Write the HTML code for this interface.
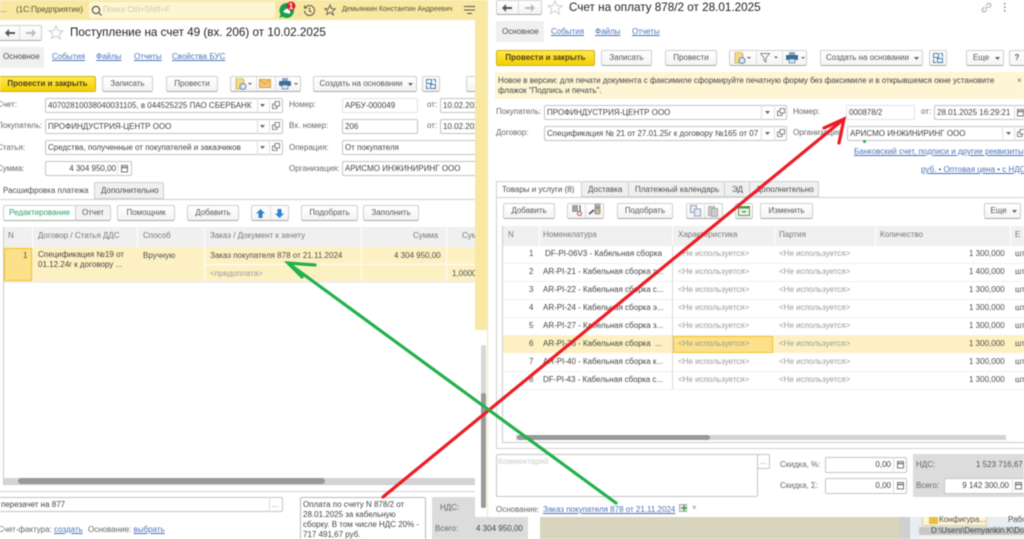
<!DOCTYPE html>
<html lang="ru"><head><meta charset="utf-8"><title>1C</title>
<style>
html,body{margin:0;padding:0;background:#fff}
#p{position:relative;width:1024px;height:539px;overflow:hidden;background:#fff;font:8px/12px "Liberation Sans",sans-serif;color:#4d4d4d;filter:blur(.4px)}
#p div,#p span.t,#p svg{position:absolute}
.t{white-space:nowrap}
.l{color:#4a72b8;text-decoration:underline}
.k{color:#666}
.b{box-sizing:border-box;background:linear-gradient(#fff,#f4f4f4);border:1px solid #cfcfcf;border-bottom-color:#a9a9a9;border-radius:2px;text-align:center;color:#555;line-height:14px;height:16px;white-space:nowrap}
.y{background:linear-gradient(#ffe84a,#f5cf00);border-color:#d0b020;color:#4a4020;font-weight:bold}
.i{box-sizing:border-box;background:#fff;border:1px solid #c4c4c4;border-radius:2px;height:15px;line-height:13px;padding-left:2px;white-space:nowrap;overflow:hidden;color:#444}
.h{background:#f0f0f0}
.g{color:#999}
.s{width:1px;background:#ddd}
.w{width:1px;height:20px;background:#fff;top:226px}
</style></head><body><div id="p">

<!-- left window -->
<div style="left:0;top:0;width:488px;height:20px;background:#f8e8a2"></div>
<span class="t" style="left:0;top:4px;color:#555">...</span>
<span class="t" style="left:16px;top:4px;color:#5a5030">(1С:Предприятие)</span>
<div style="left:89px;top:2px;width:186px;height:16px;background:#fdf6d2;border-radius:2px"></div>
<svg style="left:91px;top:5px" width="11" height="11" viewBox="0 0 11 11" fill="none" stroke="#555" stroke-width="1.2"><circle cx="5" cy="5" r="3.6"/><path d="M8 8l2.500 2.500"/></svg>
<span class="t" style="left:103px;top:4px;color:#cfc9a5">Поиск Ctrl+Shift+F</span>
<svg style="left:278px;top:1px" width="20" height="19" viewBox="0 0 20 19"><path d="M8.500 2a7.500 7.500 0 1 1-4 13.800L1.500 17l1-3.500A7.500 7.500 0 0 1 8.500 2z" fill="#12a150"/><path d="M5 11c2-3 4-4 7-4v6c-3-1-5-1-7-2z" fill="#fff"/><circle cx="13" cy="5" r="4.500" fill="#e0202a"/><text x="13" y="8" text-anchor="middle" font-size="8" font-weight="bold" fill="#fff" font-family="Liberation Sans">1</text></svg>
<svg style="left:303px;top:4px" width="13" height="13" viewBox="0 0 13 13" fill="none" stroke="#555"><path d="M2.500 3.500A5 5 0 1 1 1.500 6.500"/><path d="M1.500 1.500v2.500h2.500M6.500 3.500v3.500l2 1"/></svg>
<svg style="left:324px;top:4px" width="12" height="12" viewBox="0 0 12 12" fill="none" stroke="#666"><path d="M6 1l1.500 3.500 3.800.3-2.900 2.500.9 3.700L6 8.500 2.700 10.500l.9-3.700L.7 4.800l3.800-.3z"/></svg>
<span class="t" style="left:342px;top:4px;font-size:6.900px;color:#55503a">Демьянкин Константин Андреевич</span>
<svg style="left:463px;top:5px" width="13" height="11" viewBox="0 0 13 11" fill="none" stroke="#555"><path d="M1 1.500h11M1 5h11M4 8.500h5"/></svg>

<div class="b" style="left:-1px;top:25px;width:43px;height:16px"></div>
<div class="s" style="left:19px;top:26px;height:14px"></div>
<svg style="left:5px;top:29px" width="10" height="8" viewBox="0 0 10 8"><path d="M4 0v3h6v2H4v3L0 4z" fill="#555"/></svg>
<svg style="left:26px;top:29px" width="10" height="8" viewBox="0 0 10 8"><path d="M6 0v3H0v2h6v3l4-4z" fill="#bbb"/></svg>
<svg style="left:48px;top:25px" width="16" height="15" viewBox="0 0 16 15" fill="none" stroke="#ccc"><path d="M8 1l2 4.500 5 .4-3.800 3.200 1.200 4.900L8 11l-4.400 2.500 1.200-4.900L1 5.900l5-.4z"/></svg>
<span class="t" style="left:70px;top:25px;font-size:11.700px;line-height:15px;color:#222">Поступление на счет 49 (вх. 206) от 10.02.2025</span>

<div class="h" style="left:0;top:47px;width:44px;height:21px"></div>
<span class="t" style="left:3px;top:51px">Основное</span>
<span class="t l" style="left:52px;top:51px">События</span>
<span class="t l" style="left:96px;top:51px">Файлы</span>
<span class="t l" style="left:134px;top:51px">Отчеты</span>
<span class="t l" style="left:172px;top:51px">Свойства БУС</span>

<div class="b y" style="left:-3px;top:76px;width:99px;padding-left:2px">Провести и закрыть</div>
<div class="b" style="left:102px;top:76px;width:51px">Записать</div>
<div class="b" style="left:166px;top:76px;width:52px">Провести</div>
<div class="b" style="left:230px;top:76px;width:71px"></div>
<div class="s" style="left:256px;top:77px;height:14px"></div>
<div class="s" style="left:275px;top:77px;height:14px"></div>
<svg style="left:235px;top:78px" width="17" height="12" viewBox="0 0 17 12"><path d="M1 0h6l2 2v9H1z" fill="#f2d98c" stroke="#c9a24d" stroke-width=".7"/><circle cx="8" cy="8.500" r="3" fill="#dfe9f5" stroke="#5f86b3"/><path d="M13 5h4l-2 2z" fill="#666"/></svg>
<svg style="left:259px;top:79px" width="13" height="10" viewBox="0 0 13 10"><rect x=".5" y=".5" width="11" height="8" fill="#f2c877" stroke="#d8a24a"/><path d="M.5 .5l5.500 4.500 5.500-4.500" fill="none" stroke="#d8a24a"/></svg>
<svg style="left:279px;top:78px" width="19" height="12" viewBox="0 0 19 12"><path d="M3 0h6v3H3z" fill="#8aa5c5"/><rect x="0" y="3" width="12" height="5" rx="1" fill="#3f6c9b"/><rect x="3" y="7" width="6" height="4" fill="#d9e3ef" stroke="#3f6c9b" stroke-width=".6"/><path d="M15 5h4l-2 2z" fill="#666"/></svg>
<div class="b" style="left:313px;top:76px;width:104px;padding-right:8px">Создать на основании</div>
<svg style="left:408px;top:83px" width="5" height="3" viewBox="0 0 5 3"><path d="M0 0h5L2.500 3z" fill="#666"/></svg>
<div class="b" style="left:422px;top:76px;width:18px"></div>
<svg style="left:425px;top:78px" width="12" height="12" viewBox="0 0 12 12" fill="none" stroke="#4a7fae"><rect x="1.500" y="1.500" width="5" height="4"/><rect x="5.500" y="6.500" width="5" height="4"/><path d="M8 1.500h2.500V5M4 10.500H1.500V7"/></svg>
<div class="b" style="left:466px;top:76px;width:20px"></div>

<span class="t k" style="left:-3px;top:99px">Счет:</span>
<span class="t k" style="left:-3px;top:120px">Покупатель:</span>
<span class="t k" style="left:-3px;top:142px">Статья:</span>
<span class="t k" style="left:-3px;top:163px">Сумма:</span>
<div class="i" style="left:45px;top:98px;width:238px">40702810038040031105, в 044525225 ПАО СБЕРБАНК</div>
<div class="i" style="left:45px;top:119px;width:238px">ПРОФИНДУСТРИЯ-ЦЕНТР ООО</div>
<div class="i" style="left:45px;top:140px;width:238px">Средства, полученные от покупателей и заказчиков</div>
<div class="i" style="left:45px;top:161px;width:87px;text-align:right;padding-right:15px">4 304 950,00</div>
<div class="s" style="left:257px;top:98px;height:15px"></div><div class="s" style="left:269px;top:98px;height:15px"></div>
<div class="s" style="left:257px;top:119px;height:15px"></div><div class="s" style="left:269px;top:119px;height:15px"></div>
<div class="s" style="left:257px;top:140px;height:15px"></div><div class="s" style="left:269px;top:140px;height:15px"></div>
<div class="s" style="left:117px;top:161px;height:15px"></div>
<svg style="left:260px;top:104px" width="5" height="3" viewBox="0 0 5 3"><path d="M0 0h5L2.500 3z" fill="#666"/></svg>
<svg style="left:260px;top:125px" width="5" height="3" viewBox="0 0 5 3"><path d="M0 0h5L2.500 3z" fill="#666"/></svg>
<svg style="left:260px;top:146px" width="5" height="3" viewBox="0 0 5 3"><path d="M0 0h5L2.500 3z" fill="#666"/></svg>
<svg style="left:272px;top:101px" width="8" height="8" viewBox="0 0 8 8" fill="none" stroke="#666" stroke-width=".8"><path d="M3 .5h4.500V5H3zM3 3H.5v4.500H5V5"/></svg>
<svg style="left:272px;top:122px" width="8" height="8" viewBox="0 0 8 8" fill="none" stroke="#666" stroke-width=".8"><path d="M3 .5h4.500V5H3zM3 3H.5v4.500H5V5"/></svg>
<svg style="left:272px;top:143px" width="8" height="8" viewBox="0 0 8 8" fill="none" stroke="#666" stroke-width=".8"><path d="M3 .5h4.500V5H3zM3 3H.5v4.500H5V5"/></svg>
<svg style="left:120px;top:164px" width="9" height="9" viewBox="0 0 9 9" fill="none" stroke="#777"><rect x="1.500" y="1.500" width="6" height="6.500"/><path d="M1.500 3.500h6" stroke-width="1.500"/></svg>
<span class="t k" style="left:289px;top:99px">Номер:</span>
<span class="t k" style="left:289px;top:120px">Вх. номер:</span>
<span class="t k" style="left:289px;top:142px">Операция:</span>
<span class="t k" style="left:289px;top:163px">Организация:</span>
<div class="i" style="left:342px;top:98px;width:76px;border-color:#e2e2e2">АРБУ-000049</div>
<div class="i" style="left:342px;top:119px;width:76px">206</div>
<div class="i" style="left:342px;top:140px;width:140px">От покупателя</div>
<div class="i" style="left:342px;top:161px;width:140px">АРИСМО ИНЖИНИРИНГ ООО</div>
<span class="t k" style="left:427px;top:99px">от:</span>
<span class="t k" style="left:427px;top:120px">от:</span>
<div class="i" style="left:440px;top:98px;width:50px">10.02.2025</div>
<div class="i" style="left:440px;top:119px;width:50px">10.02.2025</div>

<div style="left:0;top:199px;width:475px;height:1px;background:#d0d0d0"></div>
<div style="left:94px;top:182px;width:70px;height:17px;box-sizing:border-box;background:#f0f0f0;border:1px solid #d0d0d0;border-radius:2px 2px 0 0"></div>
<span class="t" style="left:3px;top:185px">Расшифровка платежа</span>
<span class="t" style="left:101px;top:185px">Дополнительно</span>
<div class="b" style="left:3px;top:205px;width:73px;background:#fff;color:#2fa26a">Редактирование</div>
<div class="b" style="left:75px;top:205px;width:36px;background:#f4f4f4">Отчет</div>
<div class="b" style="left:117px;top:205px;width:58px">Помощник</div>
<div class="b" style="left:187px;top:205px;width:52px">Добавить</div>
<div class="b" style="left:251px;top:205px;width:38px"></div>
<div class="s" style="left:270px;top:206px;height:14px"></div>
<svg style="left:256px;top:209px" width="9" height="9" viewBox="0 0 9 9"><path d="M4.500 0L9 4.500H6.500V9h-4V4.500H0z" fill="#2a86d0"/></svg>
<svg style="left:275px;top:209px" width="9" height="9" viewBox="0 0 9 9"><path d="M4.500 9L9 4.500H6.500V0h-4v4.500H0z" fill="#2a86d0"/></svg>
<div class="b" style="left:301px;top:205px;width:57px">Подобрать</div>
<div class="b" style="left:363px;top:205px;width:56px">Заполнить</div>

<div style="left:3px;top:227px;width:472px;height:258px;box-sizing:border-box;border:1px solid #ccc;border-right:0"></div>
<div class="h" style="left:4px;top:227px;width:471px;height:20px"></div>
<div class="w" style="left:32px;top:227px"></div><div class="w" style="left:137px;top:227px"></div><div class="w" style="left:204px;top:227px"></div><div class="w" style="left:361px;top:227px"></div><div class="w" style="left:446px;top:227px"></div>
<span class="t" style="left:8px;top:230px;color:#777">N</span>
<span class="t" style="left:38px;top:230px;color:#777">Договор / Статья ДДС</span>
<span class="t" style="left:143px;top:230px;color:#777">Способ</span>
<span class="t" style="left:210px;top:230px;color:#777">Заказ / Документ к зачету</span>
<span class="t" style="left:413px;top:230px;color:#777">Сумма</span>
<span class="t" style="left:462px;top:230px;color:#777">Сумма</span>
<div style="left:4px;top:247px;width:471px;height:34px;background:#fdf1c3"></div>
<div style="left:4px;top:248px;width:28px;height:33px;box-sizing:border-box;background:#fde18a;border:1px solid #f2c230"></div>
<div style="left:204px;top:264px;width:271px;height:1px;background:#fff"></div>
<div style="left:204px;top:247px;width:1px;height:34px;background:#fff"></div>
<div style="left:361px;top:247px;width:1px;height:34px;background:#fff"></div>
<div style="left:446px;top:247px;width:1px;height:34px;background:#fff"></div>
<div style="left:4px;top:281px;width:471px;height:2px;background:#eee"></div>
<span class="t" style="left:23px;top:250px">1</span>
<span class="t" style="left:38px;top:250px;line-height:10px;color:#444">Спецификация №19 от<br>01.12.24г к договору ...</span>
<span class="t" style="left:143px;top:250px">Вручную</span>
<span class="t" style="left:210px;top:250px">Заказ покупателя 878 от 21.11.2024</span>
<span class="t" style="left:394px;top:250px">4 304 950,00</span>
<span class="t g" style="left:210px;top:268px">&lt;предоплата&gt;</span>
<span class="t" style="left:452px;top:268px">1,0000</span>

<div style="left:4px;top:478px;width:471px;height:6px;background:#d4d4d4"></div>
<div style="left:18px;top:478px;width:307px;height:6px;background:#999;border-radius:3px"></div>
<div style="left:0;top:491px;width:475px;height:1px;background:#d0d0d0"></div>
<div class="i" style="left:-3px;top:497px;width:286px;padding-left:3px">перезачет на 877</div>
<div class="s" style="left:269px;top:497px;height:15px"></div>
<span class="t" style="left:272px;top:499px;color:#888">...</span>
<div style="left:300px;top:497px;width:126px;height:50px;box-sizing:border-box;border:1px solid #bbb;border-radius:2px;line-height:10px;padding:2px;color:#444">Оплата по счету N 878/2 от 28.01.2025 за кабельную сборку. В том числе НДС 20% - 717 491,67 руб.</div>
<span class="t k" style="left:-2px;top:524px">Счет-фактура: <span class="l">создать</span></span>
<span class="t k" style="left:88px;top:524px">Основание: <span class="l">выбрать</span></span>
<div style="left:432px;top:497px;width:43px;height:42px;background:#dcdcdc"></div>
<div style="left:475px;top:517px;width:53px;height:22px;background:#dcdcdc"></div>
<span class="t k" style="left:440px;top:502px">НДС:</span>
<span class="t k" style="left:435px;top:523px">Всего:</span>
<span class="t" style="left:476px;top:523px;color:#444">4 304 950,00</span>

<!-- left window right strip & scrollbar -->
<div style="left:475px;top:20px;width:13px;height:310px;background:#f8e8a2"></div>
<div style="left:475px;top:330px;width:13px;height:187px;background:#fff"></div>
<div style="left:481px;top:345px;width:5px;height:163px;background:#d8d8d8;border-radius:2px"></div>
<div style="left:481px;top:393px;width:5px;height:115px;background:#9a9a9a;border-radius:2px"></div>

<!-- right window -->
<div style="left:487px;top:0;width:1px;height:517px;background:#f2e6b4"></div>
<div style="left:488px;top:0;width:536px;height:517px;background:#fff"></div>
<div class="b" style="left:496px;top:0;width:46px;height:15px"></div>
<div class="s" style="left:518px;top:0;height:14px"></div>
<svg style="left:502px;top:4px" width="10" height="8" viewBox="0 0 10 8"><path d="M4 0v3h6v2H4v3L0 4z" fill="#555"/></svg>
<svg style="left:525px;top:4px" width="10" height="8" viewBox="0 0 10 8"><path d="M6 0v3H0v2h6v3l4-4z" fill="#bbb"/></svg>
<svg style="left:547px;top:0" width="16" height="15" viewBox="0 0 16 15" fill="none" stroke="#ccc"><path d="M8 1l2 4.500 5 .4-3.800 3.200 1.200 4.900L8 11l-4.400 2.500 1.200-4.900L1 5.900l5-.4z"/></svg>
<span class="t" style="left:569px;top:0;font-size:11.700px;line-height:15px;color:#222">Счет на оплату 878/2 от 28.01.2025</span>
<svg style="left:981px;top:2px" width="11" height="11" viewBox="0 0 11 11" fill="none" stroke="#aaa" stroke-width="1.100"><path d="M4.500 6.500l2-2M3.500 5L1.500 7a1.800 1.800 0 0 0 2.500 2.500l2-2M7.500 6L9.500 4A1.800 1.800 0 0 0 7 1.500L5 3.500"/></svg>
<svg style="left:1003px;top:3px" width="3" height="9" viewBox="0 0 3 9" fill="#888"><rect x="1" y="0" width="1.500" height="1.500"/><rect x="1" y="3.500" width="1.500" height="1.500"/><rect x="1" y="7" width="1.500" height="1.500"/></svg>

<div class="h" style="left:496px;top:21px;width:48px;height:21px"></div>
<span class="t" style="left:502px;top:26px">Основное</span>
<span class="t l" style="left:551px;top:26px">События</span>
<span class="t l" style="left:595px;top:26px">Файлы</span>
<span class="t l" style="left:632px;top:26px">Отчеты</span>

<div class="b y" style="left:496px;top:50px;width:99px">Провести и закрыть</div>
<div class="b" style="left:601px;top:50px;width:51px">Записать</div>
<div class="b" style="left:665px;top:50px;width:52px">Провести</div>
<div class="b" style="left:729px;top:50px;width:78px"></div>
<div class="s" style="left:756px;top:51px;height:14px"></div>
<div class="s" style="left:782px;top:51px;height:14px"></div>
<svg style="left:734px;top:52px" width="17" height="12" viewBox="0 0 17 12"><path d="M1 0h6l2 2v9H1z" fill="#f2d98c" stroke="#c9a24d" stroke-width=".7"/><circle cx="8" cy="8.500" r="3" fill="#dfe9f5" stroke="#5f86b3"/><path d="M13 5h4l-2 2z" fill="#666"/></svg>
<svg style="left:760px;top:53px" width="19" height="10" viewBox="0 0 19 10"><path d="M.5 .5h9l-3.500 4.500v4l-2-1.500V5z" fill="none" stroke="#888"/><path d="M14 3.500h4l-2 2z" fill="#666"/></svg>
<svg style="left:786px;top:52px" width="19" height="12" viewBox="0 0 19 12"><path d="M3 0h6v3H3z" fill="#8aa5c5"/><rect x="0" y="3" width="12" height="5" rx="1" fill="#3f6c9b"/><rect x="3" y="7" width="6" height="4" fill="#d9e3ef" stroke="#3f6c9b" stroke-width=".6"/><path d="M15 5h4l-2 2z" fill="#666"/></svg>
<div class="b" style="left:820px;top:50px;width:103px;padding-right:8px">Создать на основании</div>
<svg style="left:914px;top:57px" width="5" height="3" viewBox="0 0 5 3"><path d="M0 0h5L2.500 3z" fill="#666"/></svg>
<div class="b" style="left:929px;top:50px;width:18px"></div>
<svg style="left:932px;top:52px" width="12" height="12" viewBox="0 0 12 12" fill="none" stroke="#4a7fae"><rect x="1.500" y="1.500" width="5" height="4"/><rect x="5.500" y="6.500" width="5" height="4"/><path d="M8 1.500h2.500V5M4 10.500H1.500V7"/></svg>
<div class="b" style="left:966px;top:50px;width:38px;padding-right:8px">Еще</div>
<svg style="left:995px;top:57px" width="5" height="3" viewBox="0 0 5 3"><path d="M0 0h5L2.500 3z" fill="#666"/></svg>
<div class="b" style="left:1009px;top:50px;width:30px;padding-right:14px;font-weight:bold">?</div>

<div style="left:495px;top:72px;width:529px;height:27px;background:#fdf5d3"></div>
<span class="t" style="left:498px;top:76px;font-size:7.950px;line-height:10px;color:#444">Новое в версии: для печати документа с факсимиле сформируйте печатную форму без факсимиле и в открывшемся окне установите<br>флажок "Подпись и печать".</span>
<span class="t" style="left:1017px;top:75px;color:#666">×</span>

<span class="t k" style="left:496px;top:106px">Покупатель:</span>
<span class="t k" style="left:496px;top:127px">Договор:</span>
<div class="i" style="left:544px;top:105px;width:243px">ПРОФИНДУСТРИЯ-ЦЕНТР ООО</div>
<div class="i" style="left:544px;top:126px;width:243px">Спецификация № 21 от 27.01.25г к договору №165 от 07</div>
<div class="s" style="left:761px;top:105px;height:15px"></div><div class="s" style="left:774px;top:105px;height:15px"></div>
<div class="s" style="left:761px;top:126px;height:15px"></div><div class="s" style="left:774px;top:126px;height:15px"></div>
<svg style="left:765px;top:111px" width="5" height="3" viewBox="0 0 5 3"><path d="M0 0h5L2.500 3z" fill="#666"/></svg>
<svg style="left:765px;top:132px" width="5" height="3" viewBox="0 0 5 3"><path d="M0 0h5L2.500 3z" fill="#666"/></svg>
<svg style="left:777px;top:108px" width="8" height="8" viewBox="0 0 8 8" fill="none" stroke="#666" stroke-width=".8"><path d="M3 .5h4.500V5H3zM3 3H.5v4.500H5V5"/></svg>
<svg style="left:777px;top:129px" width="8" height="8" viewBox="0 0 8 8" fill="none" stroke="#666" stroke-width=".8"><path d="M3 .5h4.500V5H3zM3 3H.5v4.500H5V5"/></svg>
<span class="t k" style="left:793px;top:106px">Номер:</span>
<span class="t k" style="left:793px;top:127px">Организация:</span>
<div class="i" style="left:846px;top:105px;width:69px;border-color:#e4e4e4">000878/2</div>
<span class="t k" style="left:921px;top:106px">от:</span>
<div class="i" style="left:934px;top:105px;width:100px">28.01.2025 16:29:21</div>
<div class="s" style="left:1014px;top:105px;height:15px"></div>
<svg style="left:1016px;top:108px" width="9" height="9" viewBox="0 0 9 9" fill="none" stroke="#777"><rect x="1.500" y="1.500" width="6" height="6.500"/><path d="M1.500 3.500h6" stroke-width="1.500"/></svg>
<div class="i" style="left:847px;top:126px;width:190px">АРИСМО ИНЖИНИРИНГ ООО</div>
<div class="s" style="left:1002px;top:126px;height:15px"></div>
<div class="s" style="left:1014px;top:126px;height:15px"></div>
<svg style="left:1006px;top:132px" width="5" height="3" viewBox="0 0 5 3"><path d="M0 0h5L2.500 3z" fill="#666"/></svg>
<svg style="left:1017px;top:129px" width="8" height="8" viewBox="0 0 8 8" fill="none" stroke="#666" stroke-width=".8"><path d="M3 .5h4.500V5H3zM3 3H.5v4.500H5V5"/></svg>
<div style="left:863px;top:140px;width:3px;height:3px;border-radius:2px;background:#22b14c"></div>
<span class="t l" style="left:854px;top:146px">Банковский счет, подписи и другие реквизиты</span>
<span class="t l" style="left:921px;top:164px">руб. • Оптовая цена • с НДС</span>

<div style="left:496px;top:197px;width:528px;height:1px;background:#d0d0d0"></div>
<div style="left:496px;top:181px;width:1px;height:267px;background:#d0d0d0"></div>
<div style="left:496px;top:181px;width:85px;height:1px;background:#d0d0d0"></div>
<div style="left:581px;top:181px;width:238px;height:16px;box-sizing:border-box;background:#f0f0f0;border:1px solid #d0d0d0;border-radius:2px 2px 0 0"></div>
<div style="left:628px;top:181px;width:1px;height:16px;background:#d0d0d0"></div>
<div style="left:724px;top:181px;width:1px;height:16px;background:#d0d0d0"></div>
<div style="left:749px;top:181px;width:1px;height:16px;background:#d0d0d0"></div>
<span class="t" style="left:502px;top:184px">Товары и услуги (8)</span>
<span class="t" style="left:588px;top:184px">Доставка</span>
<span class="t" style="left:635px;top:184px">Платежный календарь</span>
<span class="t" style="left:732px;top:184px">ЭД</span>
<span class="t" style="left:756px;top:184px">Дополнительно</span>

<div class="b" style="left:503px;top:203px;width:52px">Добавить</div>
<div class="b" style="left:567px;top:203px;width:37px"></div>
<div class="s" style="left:585px;top:204px;height:14px"></div>
<svg style="left:572px;top:205px" width="11" height="12" viewBox="0 0 11 12"><path d="M1 0v7M3 0v7M5 0v7M8 0v7" stroke="#666" stroke-width="1.200"/><circle cx="7.500" cy="8.500" r="2" fill="none" stroke="#a55"/></svg>
<svg style="left:589px;top:204px" width="12" height="13" viewBox="0 0 12 13"><rect x="6" y="0" width="5" height="10" rx="1" fill="#d9b878" stroke="#666" stroke-width=".6"/><rect x="7" y="2" width="3" height="3" fill="#5aa0d8"/><path d="M0 10l5-4" stroke="#446" stroke-width="1.500"/></svg>
<div class="b" style="left:617px;top:203px;width:56px">Подобрать</div>
<div class="b" style="left:686px;top:203px;width:37px"></div>
<div class="s" style="left:704px;top:204px;height:14px"></div>
<svg style="left:690px;top:205px" width="11" height="12" viewBox="0 0 11 12" fill="#e7edf5" stroke="#8fa3bb"><rect x=".5" y=".5" width="6" height="7"/><rect x="4.500" y="4" width="6" height="7"/></svg>
<svg style="left:708px;top:205px" width="10" height="12" viewBox="0 0 10 12" fill="#ccc" stroke="#aaa"><rect x=".5" y="1.500" width="6" height="9"/><rect x="3.500" y="3.500" width="6" height="8"/></svg>
<div class="b" style="left:735px;top:203px;width:18px"></div>
<svg style="left:738px;top:206px" width="12" height="10" viewBox="0 0 12 10"><rect x=".5" y=".5" width="11" height="9" fill="#eaf3e2" stroke="#5e9a55"/><path d="M.5 .5h11v2H.5z" fill="#3f9a4d"/><path d="M3 5l3 2 3-2z" fill="#5e9a55"/></svg>
<div class="b" style="left:760px;top:203px;width:53px">Изменить</div>
<div class="b" style="left:984px;top:203px;width:37px;padding-right:8px">Еще</div>
<svg style="left:1012px;top:210px" width="5" height="3" viewBox="0 0 5 3"><path d="M0 0h5L2.500 3z" fill="#666"/></svg>

<div style="left:502px;top:226px;width:522px;height:217px;box-sizing:border-box;border:1px solid #ccc;border-right:0"></div>
<div class="h" style="left:503px;top:226px;width:521px;height:20px"></div>
<div class="w" style="left:539px"></div><div class="w" style="left:672px"></div><div class="w" style="left:774px"></div><div class="w" style="left:875px"></div><div class="w" style="left:1010px"></div>
<span class="t" style="left:508px;top:229px;color:#777">N</span>
<span class="t" style="left:543px;top:229px;color:#777">Номенклатура</span>
<span class="t" style="left:678px;top:229px;color:#777">Характеристика</span>
<span class="t" style="left:779px;top:229px;color:#777">Партия</span>
<span class="t" style="left:880px;top:229px;color:#777">Количество</span>
<span class="t" style="left:1015px;top:229px;color:#777">Е</span>

<div style="left:503px;top:335px;width:521px;height:18px;background:#fdf1c3"></div>
<div style="left:673px;top:336px;width:100px;height:17px;box-sizing:border-box;background:#fde18a;border:1px solid #f2c230"></div>
<div style="left:503px;top:263px;width:521px;height:1px;background:#f0f0f0"></div>
<div style="left:503px;top:281px;width:521px;height:1px;background:#f0f0f0"></div>
<div style="left:503px;top:299px;width:521px;height:1px;background:#f0f0f0"></div>
<div style="left:503px;top:317px;width:521px;height:1px;background:#f0f0f0"></div>
<div style="left:503px;top:371px;width:521px;height:1px;background:#f0f0f0"></div>
<div style="left:503px;top:389px;width:521px;height:1px;background:#f0f0f0"></div>
<div style="left:672px;top:246px;width:1px;height:143px;background:#d8d8d8"></div>

<span class="t" style="left:529px;top:248px">1</span><span class="t" style="left:545px;top:248px;color:#444">DF-PI-06V3 - Кабельная сборка</span><span class="t g" style="left:678px;top:248px">&lt;Не используется&gt;</span><span class="t g" style="left:779px;top:248px">&lt;Не используется&gt;</span><span class="t" style="left:969px;top:248px">1 300,000</span><span class="t" style="left:1015px;top:248px">шт</span>
<span class="t" style="left:529px;top:266px">2</span><span class="t" style="left:543px;top:266px;color:#444">AR-PI-21 - Кабельная сборка э...</span><span class="t g" style="left:678px;top:266px">&lt;Не используется&gt;</span><span class="t g" style="left:779px;top:266px">&lt;Не используется&gt;</span><span class="t" style="left:969px;top:266px">1 400,000</span><span class="t" style="left:1015px;top:266px">шт</span>
<span class="t" style="left:529px;top:284px">3</span><span class="t" style="left:543px;top:284px;color:#444">AR-PI-22 - Кабельная сборка с...</span><span class="t g" style="left:678px;top:284px">&lt;Не используется&gt;</span><span class="t g" style="left:779px;top:284px">&lt;Не используется&gt;</span><span class="t" style="left:969px;top:284px">1 300,000</span><span class="t" style="left:1015px;top:284px">шт</span>
<span class="t" style="left:529px;top:302px">4</span><span class="t" style="left:543px;top:302px;color:#444">AR-PI-24 - Кабельная сборка э...</span><span class="t g" style="left:678px;top:302px">&lt;Не используется&gt;</span><span class="t g" style="left:779px;top:302px">&lt;Не используется&gt;</span><span class="t" style="left:969px;top:302px">1 300,000</span><span class="t" style="left:1015px;top:302px">шт</span>
<span class="t" style="left:529px;top:320px">5</span><span class="t" style="left:543px;top:320px;color:#444">AR-PI-27 - Кабельная сборка з...</span><span class="t g" style="left:678px;top:320px">&lt;Не используется&gt;</span><span class="t g" style="left:779px;top:320px">&lt;Не используется&gt;</span><span class="t" style="left:969px;top:320px">1 300,000</span><span class="t" style="left:1015px;top:320px">шт</span>
<span class="t" style="left:529px;top:338px">6</span><span class="t" style="left:543px;top:338px;color:#444">AR-PI-36 - Кабельная сборка &nbsp;...</span><span class="t g" style="left:678px;top:338px">&lt;Не используется&gt;</span><span class="t g" style="left:779px;top:338px">&lt;Не используется&gt;</span><span class="t" style="left:969px;top:338px">1 300,000</span><span class="t" style="left:1015px;top:338px">шт</span>
<span class="t" style="left:529px;top:356px">7</span><span class="t" style="left:543px;top:356px;color:#444">AR-PI-40 - Кабельная сборка к...</span><span class="t g" style="left:678px;top:356px">&lt;Не используется&gt;</span><span class="t g" style="left:779px;top:356px">&lt;Не используется&gt;</span><span class="t" style="left:969px;top:356px">1 300,000</span><span class="t" style="left:1015px;top:356px">шт</span>
<span class="t" style="left:529px;top:374px">8</span><span class="t" style="left:543px;top:374px;color:#444">DF-PI-43 - Кабельная сборка с...</span><span class="t g" style="left:678px;top:374px">&lt;Не используется&gt;</span><span class="t g" style="left:779px;top:374px">&lt;Не используется&gt;</span><span class="t" style="left:969px;top:374px">1 300,000</span><span class="t" style="left:1015px;top:374px">шт</span>

<div style="left:516px;top:435px;width:490px;height:5px;background:#d4d4d4"></div>
<div style="left:517px;top:435px;width:193px;height:5px;background:#999;border-radius:3px"></div>
<div style="left:496px;top:448px;width:528px;height:1px;background:#d0d0d0"></div>

<div style="left:496px;top:454px;width:262px;height:43px;box-sizing:border-box;border:1px solid #c4c4c4;border-radius:2px"></div>
<div class="i" style="left:757px;top:454px;width:13px;padding:0;text-align:center;color:#888">...</div>
<span class="t" style="left:498px;top:456px;color:#ccc">Комментарий</span>
<span class="t k" style="left:780px;top:459px">Скидка, %:</span>
<span class="t k" style="left:780px;top:480px">Скидка, Σ:</span>
<div class="i" style="left:825px;top:457px;width:82px;height:16px;line-height:14px;text-align:right;padding-right:15px">0,00</div>
<div class="i" style="left:825px;top:478px;width:82px;height:16px;line-height:14px;text-align:right;padding-right:15px">0,00</div>
<div class="s" style="left:893px;top:457px;height:16px"></div>
<div class="s" style="left:893px;top:478px;height:16px"></div>
<svg style="left:896px;top:460px" width="9" height="9" viewBox="0 0 9 9" fill="none" stroke="#777"><rect x="1.500" y="1.500" width="6" height="6.500"/><path d="M1.500 3.500h6" stroke-width="1.500"/></svg>
<svg style="left:896px;top:481px" width="9" height="9" viewBox="0 0 9 9" fill="none" stroke="#777"><rect x="1.500" y="1.500" width="6" height="6.500"/><path d="M1.500 3.500h6" stroke-width="1.500"/></svg>
<div style="left:913px;top:454px;width:111px;height:43px;background:#dcdcdc"></div>
<span class="t k" style="left:916px;top:459px">НДС:</span>
<span class="t k" style="left:916px;top:480px">Всего:</span>
<span class="t" style="left:976px;top:459px;color:#555">1 523 716,67</span>
<div class="i" style="left:944px;top:478px;width:90px;height:16px;line-height:14px;text-align:right;padding-right:24px">9 142 300,00</div>
<div class="s" style="left:1012px;top:478px;height:16px"></div>
<svg style="left:1014px;top:481px" width="9" height="9" viewBox="0 0 9 9" fill="none" stroke="#777"><rect x="1.500" y="1.500" width="6" height="6.500"/><path d="M1.500 3.500h6" stroke-width="1.500"/></svg>
<span class="t k" style="left:496px;top:504px">Основание:</span>
<span class="t l" style="left:543px;top:504px">Заказ покупателя 878 от 21.11.2024</span>
<svg style="left:679px;top:503px" width="10" height="10" viewBox="0 0 10 10"><rect x=".5" y="1.500" width="7" height="7" fill="#eee" stroke="#aaa"/><path d="M5 2v6M2 5h6" stroke="#2a9a40" stroke-width="1.300"/></svg>
<span class="t" style="left:692px;top:502px;color:#888">×</span>

<!-- bottom background strip -->
<div style="left:528px;top:517px;width:496px;height:22px;background:#fff"></div>
<div style="left:540px;top:517px;width:359px;height:22px;background:#d8d4bd"></div>
<div style="left:899px;top:517px;width:11px;height:22px;background:#cfcfcf"></div>
<div style="left:910px;top:517px;width:114px;height:22px;background:#e8edf2"></div>
<div style="left:922px;top:517px;width:65px;height:9px;background:#fdf3d6;border:1px solid #e0cf9a;border-top:0;box-sizing:border-box"></div>
<span class="t" style="left:939px;top:514px;color:#555">Конфигура...</span>
<div style="left:929px;top:517px;width:9px;height:7px;background:#e6c040"></div>
<span class="t" style="left:1008px;top:514px;color:#555">Рабо</span>
<div style="left:919px;top:527px;width:105px;height:8px;background:#c8c8c8"></div>
<span class="t" style="left:931px;top:525px;color:#444">D:\Users\Demyankin.K\Down</span>
<div style="left:919px;top:535px;width:105px;height:4px;background:#f2f2f2"></div>

<!-- annotation arrows -->
<svg style="left:0;top:0" width="1024" height="539" viewBox="0 0 1024 539" fill="none" stroke-linecap="round">
<path d="M383 497L844 119M824 128L844 119L839 143" stroke="#ed1c24" stroke-width="3.200"/>
<path d="M616 503L288 263M315 265L288 263L302 277" stroke="#22b14c" stroke-width="3.200"/>
</svg>
</div></body></html>
